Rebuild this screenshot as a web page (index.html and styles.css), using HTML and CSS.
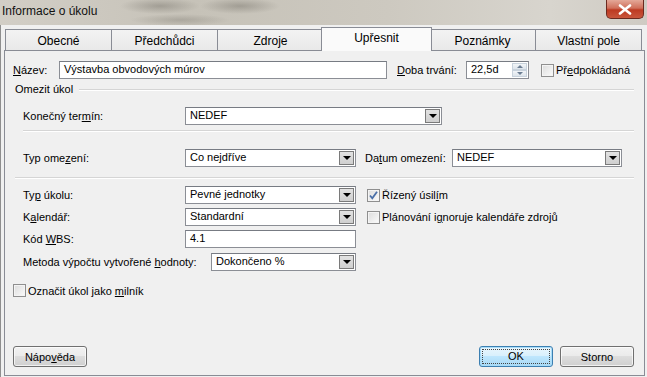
FILE: index.html
```html
<!DOCTYPE html>
<html lang="cs">
<head>
<meta charset="UTF-8">
<title>Informace o úkolu</title>
<link rel="stylesheet" href="styles.css">
</head>
<body>
<div class="window">
    <div class="titlebar">
        <span class="title">Informace o úkolu</span>
        <div class="close-btn">
            <svg width="14" height="11" viewBox="0 0 14 11"><path d="M2 1.5 L12 9.5 M12 1.5 L2 9.5" stroke="#fff" stroke-width="2.6" stroke-linecap="round"/></svg>
        </div>
    </div>
    <div class="client">
        <div class="tabs">
            <div class="tab">Obecné</div>
            <div class="tab">Předchůdci</div>
            <div class="tab">Zdroje</div>
            <div class="tab active">Upřesnit</div>
            <div class="tab">Poznámky</div>
            <div class="tab">Vlastní pole</div>
        </div>
        <div class="panel">
            <div class="row row-name">
                <label class="lbl lbl-name"><u>N</u>ázev:</label>
                <div class="field w-name">Výstavba obvodových múrov</div>
                <label class="lbl lbl-dur"><u>D</u>oba trvání:</label>
                <div class="field spin">22,5d
                    <div class="spin-btns">
                        <span class="spin-up"></span>
                        <span class="spin-down"></span>
                    </div>
                </div>
                <span class="check"></span>
                <span class="check-text">Př<u>e</u>dpokládaná</span>
            </div>

            <div class="group-head">
                <span>Omezit úkol</span>
                <div class="group-line"></div>
            </div>

            <div class="row row-deadline indent">
                <label class="lbl lbl-main">Konečný ter<u>m</u>ín:</label>
                <div class="combo w-long">NEDEF<span class="drop"></span></div>
            </div>

            <div class="sep sep-inner"></div>

            <div class="row row-constraint indent">
                <label class="lbl lbl-main">Typ ome<u>z</u>ení:</label>
                <div class="combo w-mid">Co nejdříve<span class="drop"></span></div>
                <label class="lbl lbl-date">Da<u>t</u>um omezení:</label>
                <div class="combo w-date">NEDEF<span class="drop"></span></div>
            </div>

            <div class="sep sep-outer"></div>

            <div class="row row-type indent">
                <label class="lbl lbl-main">Ty<u>p</u> úkolu:</label>
                <div class="combo w-mid">Pevné jednotky<span class="drop"></span></div>
                <span class="check checked">
                    <svg width="11" height="11" viewBox="0 0 11 11"><path d="M2 5.5 L4.3 8.3 L9 1.8" fill="none" stroke="#4a6fa8" stroke-width="1.8"/></svg>
                </span>
                <span class="check-text">Řízený úsil<u>í</u>m</span>
            </div>

            <div class="row row-cal indent">
                <label class="lbl lbl-main">K<u>a</u>lendář:</label>
                <div class="combo w-mid">Standardní<span class="drop"></span></div>
                <span class="check"></span>
                <span class="check-text">Plánování i<u>g</u>noruje kalendáře zdrojů</span>
            </div>

            <div class="row row-wbs indent">
                <label class="lbl lbl-main">Kód <u>W</u>BS:</label>
                <div class="field w-mid">4.1</div>
            </div>

            <div class="row row-earned indent">
                <label class="lbl lbl-earned">Metoda výpočtu vytvořené <u>h</u>odnoty:</label>
                <div class="combo w-earned">Dokončeno %<span class="drop"></span></div>
            </div>

            <div class="row row-milestone">
                <span class="check"></span>
                <span class="check-text">Označit úkol jako <u>m</u>ilník</span>
            </div>

            <div class="buttons">
                <button class="btn">Nápo<u>v</u>ěda</button>
                <span class="spacer"></span>
                <button class="btn btn-default"><span class="focus">OK</span></button>
                <button class="btn">Storno</button>
            </div>
        </div>
    </div>
</div>
</body>
</html>
```

FILE: styles.css
```css
* {
    box-sizing: border-box;
}

body {
    margin: 0;
    font-family: "Liberation Sans", Arial, sans-serif;
    font-size: 11px;
    color: #000;
    background: #f0f0f0;
}

.window {
    width: 647px;
    height: 377px;
    display: flex;
    flex-direction: column;
    overflow: hidden;
}

/* blurred glass title bar */
.titlebar {
    height: 25px;
    display: flex;
    align-items: flex-start;
    background:
        radial-gradient(ellipse 40px 8px at 160px 6px, rgba(90, 86, 78, 0.35), transparent),
        radial-gradient(ellipse 40px 8px at 240px 6px, rgba(90, 86, 78, 0.35), transparent),
        radial-gradient(ellipse 50px 6px at 180px 20px, rgba(90, 86, 78, 0.25), transparent),
        linear-gradient(90deg, #d2cec6 0%, #c6c2b8 30%, #cdc9c0 60%, #d8d5ce 85%, #cfcbc3 100%);
}

.title {
    padding: 4px 0 0 2px;
    font-size: 12px;
    color: #111;
}

.close-btn {
    margin-left: auto;
    margin-right: 3px;
    width: 38px;
    height: 19px;
    display: flex;
    align-items: center;
    justify-content: center;
    border: 1px solid #6b2a20;
    border-top: none;
    border-radius: 0 0 5px 5px;
    background: linear-gradient(#e4a898 0%, #d0705b 45%, #bd3a22 55%, #c9563c 100%);
}

.client {
    flex: 1;
    display: flex;
    flex-direction: column;
    padding: 0 2px 1px 3px;
    border-left: 1px solid #8e8e8e;
    background: #f0f0f0;
}

.tabs {
    height: 25px;
    display: flex;
    align-items: flex-end;
    padding-left: 1px;
}

.tab {
    width: 107px;
    height: 21px;
    margin-right: -1px;
    flex: none;
    display: flex;
    align-items: center;
    justify-content: center;
    padding-top: 1px;
    font-size: 12px;
    border: 1px solid #898c95;
    border-bottom: none;
    background: linear-gradient(#f3f3f3, #e9e9e9);
}

.tab.active {
    position: relative;
    width: 111px;
    height: 24px;
    margin: 0 -3px -1px -2px;
    padding: 0 0 3px 0;
    background: #fafafa;
}

.panel {
    flex: 1;
    display: flex;
    flex-direction: column;
    padding: 0 10px 8px 8px;
    border: 1px solid #898c95;
    background: #f0f0f0;
}

.row {
    display: flex;
    align-items: center;
    height: 18px;
}

.indent {
    padding-left: 10px;
}

.lbl {
    white-space: nowrap;
}

.lbl-name { width: 46px; }
.lbl-dur { width: 69px; margin-left: 10px; }
.lbl-main { width: 162px; }
.lbl-date { width: 87px; margin-left: 9px; }
.lbl-earned { width: 188px; }

.field, .combo {
    position: relative;
    height: 18px;
    padding: 1px 4px 0 4px;
    align-self: flex-start;
    border: 1px solid #8b8e95;
    border-top-color: #777b83;
    background: #fff;
    white-space: nowrap;
}

.w-name { width: 328px; }
.w-long { width: 257px; }
.w-mid { width: 171px; }
.w-date { width: 170px; }
.w-earned { width: 145px; }

.drop {
    position: absolute;
    top: 1px;
    right: 1px;
    width: 15px;
    height: 14px;
    border: 1px solid #7a7a7a;
    background: linear-gradient(#e2e2e2, #cfcfcf);
}

.drop::after {
    content: "";
    position: absolute;
    left: 3px;
    top: 4px;
    border-left: 4px solid transparent;
    border-right: 4px solid transparent;
    border-top: 4px solid #000;
}

.spin {
    width: 63px;
}

.spin-btns {
    position: absolute;
    top: 1px;
    right: 1px;
    width: 15px;
    height: 14px;
    display: flex;
    flex-direction: column;
}

.spin-up, .spin-down {
    flex: 1;
    position: relative;
    border: 1px solid #c8d2dc;
    background: linear-gradient(#f2f5f8, #dde4eb);
}

.spin-up::after, .spin-down::after {
    content: "";
    position: absolute;
    left: 4px;
    border-left: 3px solid transparent;
    border-right: 3px solid transparent;
}

.spin-up::after {
    top: 1px;
    border-bottom: 3px solid #6b7d92;
}

.spin-down::after {
    top: 1px;
    border-top: 3px solid #6b7d92;
}

.check {
    width: 13px;
    height: 13px;
    flex: none;
    display: flex;
    align-items: center;
    justify-content: center;
    border: 1px solid #8f8f8f;
    background: linear-gradient(135deg, #dcdcdc, #fbfbfb);
    box-shadow: inset 0 0 0 1px #f4f4f4;
}

.check-text {
    margin-left: 2px;
    white-space: nowrap;
}

.row-name {
    margin-top: 10px;
}

.row-name .check {
    margin-left: 12px;
}

.group-head {
    display: flex;
    align-items: center;
    height: 12px;
    margin-top: 4px;
    padding-left: 2px;
}

.group-line {
    flex: 1;
    margin-left: 6px;
    margin-top: 1px;
    border-top: 1px solid #d5d5d5;
    border-bottom: 1px solid #fff;
}

.sep {
    height: 2px;
    border-top: 1px solid #d5d5d5;
    border-bottom: 1px solid #fff;
}

.sep-inner {
    margin: 5px 0 0 10px;
}

.sep-outer {
    margin: 10px 0 0 2px;
}

.row-deadline { margin-top: 12px; }
.row-constraint { margin-top: 17px; }
.row-type { margin-top: 7px; }
.row-cal { margin-top: 4px; }
.row-wbs { margin-top: 4px; }
.row-earned { margin-top: 5px; }

.row-type .check, .row-cal .check {
    margin-left: 11px;
    align-self: flex-start;
    margin-top: 3px;
}

.row-type .check-text, .row-cal .check-text {
    align-self: flex-start;
    margin-top: 3px;
}

.row-milestone {
    margin-top: 13px;
    height: 13px;
}

.buttons {
    margin-top: auto;
    display: flex;
    gap: 7px;
}

.spacer {
    flex: 1;
}

.btn {
    width: 74px;
    height: 21px;
    padding: 0;
    font-family: "Liberation Sans", Arial, sans-serif;
    font-size: 11px;
    color: #000;
    border: 1px solid #707070;
    border-radius: 3px;
    background: linear-gradient(#f2f2f2 0%, #ebebeb 45%, #dddddd 50%, #cfcfcf 100%);
    box-shadow: inset 0 0 0 1px rgba(255, 255, 255, 0.7);
}

.btn-default {
    border-color: #3c7fb1;
    background: linear-gradient(#eaf6fd 0%, #d9f0fc 45%, #bee6fd 50%, #a7d9f5 100%);
    box-shadow: inset 0 0 0 1px #a8dcf8;
}

.focus {
    display: block;
    margin: 2px;
    line-height: 13px;
    border: 1px dotted #444;
}
```
